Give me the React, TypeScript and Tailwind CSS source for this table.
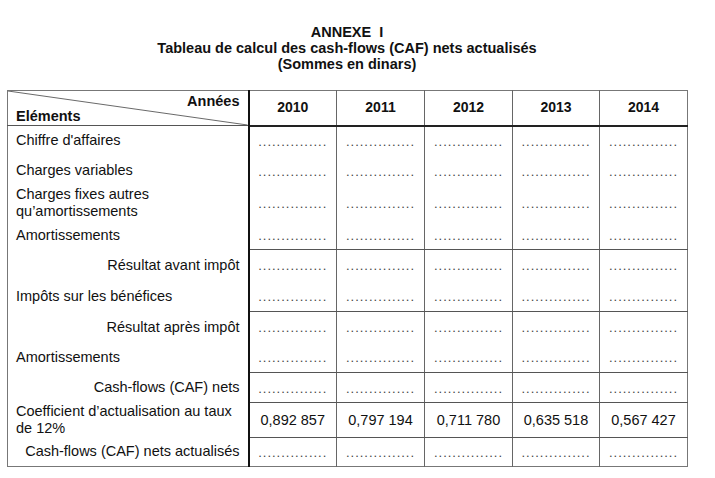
const YEARS = ['2010', '2011', '2012', '2013', '2014'];
const COEFS = ['0,892 857', '0,797 194', '0,711 780', '0,635 518', '0,567 427'];
const DOTS = '...............';

type Row = {
  label: string[];
  h: string;
  right?: boolean;
  end?: boolean;
  values?: string[];
};

// `end` closes a group: only those rows draw a rule across the year columns.
const ROWS: Row[] = [
  { label: ["Chiffre d'affaires"], h: 'h-[30px]' },
  { label: ['Charges variables'], h: 'h-[30px]' },
  { label: ['Charges fixes autres', 'qu’amortissements'], h: 'h-[35px]' },
  { label: ['Amortissements'], h: 'h-[29px]', end: true },
  { label: ['Résultat avant impôt'], h: 'h-[31px]', right: true },
  { label: ['Impôts sur les bénéfices'], h: 'h-[31px]', end: true },
  { label: ['Résultat après impôt'], h: 'h-[31px]', right: true },
  { label: ['Amortissements'], h: 'h-[30px]', end: true },
  { label: ['Cash-flows (CAF) nets'], h: 'h-[30px]', right: true, end: true },
  {
    label: ['Coefficient d’actualisation au taux', 'de 12%'],
    h: 'h-[35px]',
    end: true,
    values: COEFS,
  },
  { label: ['Cash-flows (CAF) nets actualisés'], h: 'h-[29px]', right: true },
];

export default function App() {
  return (
    <div className="min-h-[478px] w-[715px] bg-white pt-6 pl-[7px] font-['Liberation_Sans',Arial,sans-serif] text-[#111]">
      <div className="w-[680px] text-center text-[14.5px] leading-4 font-bold">
        <p>ANNEXE&nbsp;&nbsp;I</p>
        <p>Tableau de calcul des cash-flows (CAF) nets actualisés</p>
        <p>(Sommes en dinars)</p>
      </div>

      <table className="mt-[18px] w-[680px] table-fixed border-collapse border border-[#777]">
        <colgroup>
          <col className="w-[241px]" />
          <col className="w-[88px]" />
          <col className="w-[88px]" />
          <col className="w-[88px]" />
          <col className="w-[87px]" />
          <col className="w-[88px]" />
        </colgroup>
        <thead>
          <tr className="h-[35px]">
            <th className="relative border-r-2 border-b border-r-[#111] border-b-[#555] p-0 text-[14.5px] font-bold">
              <svg
                className="absolute inset-0 h-full w-full"
                viewBox="0 0 241 35"
                preserveAspectRatio="none"
              >
                <line x1="0" y1="0" x2="241" y2="35" stroke="#666" strokeWidth="1" />
              </svg>
              <span className="absolute top-[2px] right-2 leading-4">Années</span>
              <span className="absolute bottom-[1px] left-2 leading-4">Eléments</span>
            </th>
            {YEARS.map((y) => (
              <th
                key={y}
                className="border-b-2 border-l border-b-[#222] border-l-[#666] p-0 text-center text-[14px] font-bold"
              >
                {y}
              </th>
            ))}
          </tr>
        </thead>
        <tbody>
          {ROWS.map((row, i) => (
            <tr key={i} className={row.h}>
              <td
                className={`border-r-2 border-r-[#111] p-0 text-[14.5px] leading-[17px] ${
                  row.right ? 'pr-2 text-right' : 'pl-2 text-left'
                }`}
              >
                {row.label.map((l) => (
                  <div key={l}>{l}</div>
                ))}
              </td>
              {YEARS.map((y, j) => (
                <td
                  key={y}
                  className={`border-l border-l-[#666] p-0 text-center align-middle ${
                    row.end ? 'border-b border-b-[#555]' : ''
                  }`}
                >
                  {row.values ? (
                    <span className="text-[14.5px]">{row.values[j]}</span>
                  ) : (
                    <span className="text-[13px] tracking-[1px] text-[#444]">{DOTS}</span>
                  )}
                </td>
              ))}
            </tr>
          ))}
        </tbody>
      </table>
    </div>
  );
}
